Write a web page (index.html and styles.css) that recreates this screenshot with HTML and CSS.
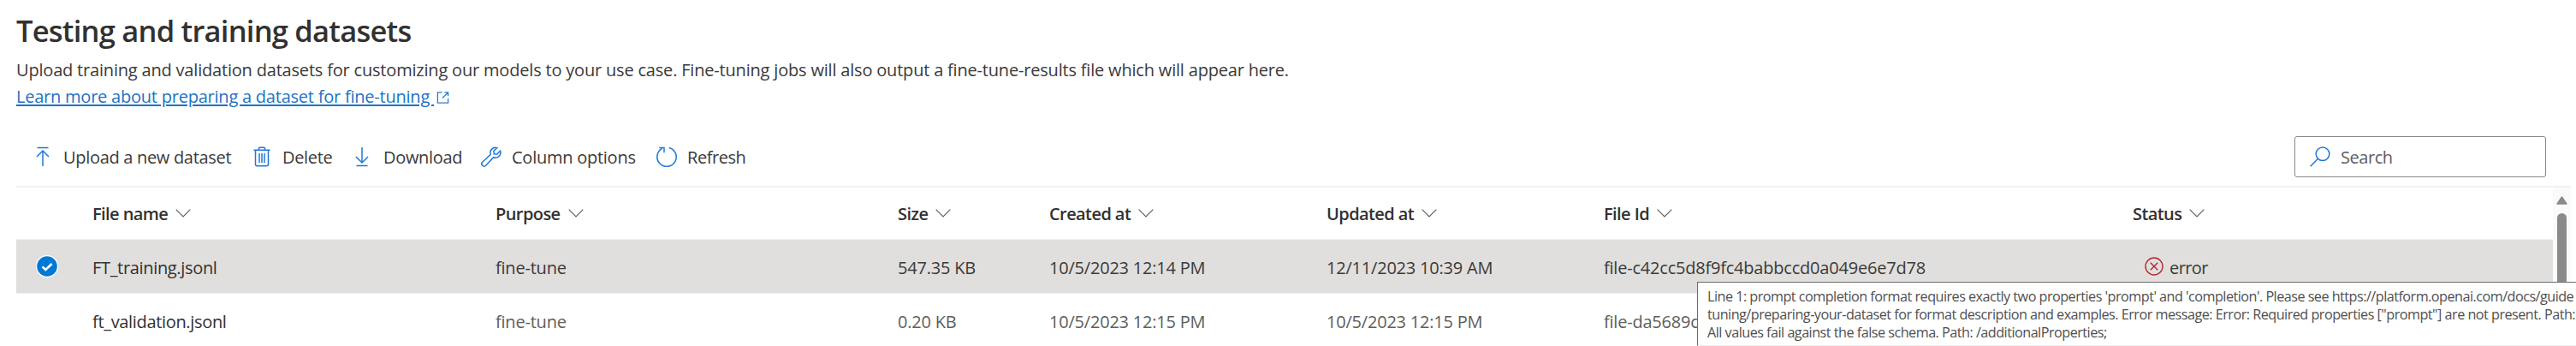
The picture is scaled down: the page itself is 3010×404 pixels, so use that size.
FILE: index.html
```html
<!DOCTYPE html>
<html lang="en">
<head>
<meta charset="utf-8">
<title>Testing and training datasets</title>
<link rel="stylesheet" href="styles.css">
</head>
<body>
<main class="page">
  <h1 class="title">Testing and training datasets</h1>
  <p class="intro">Upload training and validation datasets for customizing our models to your use case. Fine-tuning jobs will also output a fine-tune-results file which will appear here.</p>
  <p class="intro link-line"><a class="link">Learn more about preparing a dataset for fine-tuning&nbsp;</a><svg class="ext" viewBox="0 0 16 16"><path d="M7 1.500H1.500V14.500H14.500V9M10 1.500H14.500V6M14.500 1.500L7.500 8.500"/></svg></p>

  <div class="toolbar">
    <button class="cmd upload"><svg viewBox="0 0 24 24"><path d="M5.500 1.500H18.500M12 23V5M5 12L12 5L19 12"/></svg><span>Upload a new dataset</span></button>
    <button class="cmd delete"><svg viewBox="0 0 24 24"><path d="M2.500 4.200H21.500M4.500 4.200V20.700Q4.500 22.700 6.500 22.700H17.500Q19.500 22.700 19.500 20.700V4.200M8.500 4V2Q8.500 1.200 9.300 1.200H14.700Q15.500 1.200 15.500 2V4M9 8V19M12 8V19M15 8V19"/></svg><span>Delete</span></button>
    <button class="cmd download"><svg viewBox="0 0 24 24"><path d="M5.500 22.500H18.500M12 1V19M5 12L12 19L19 12"/></svg><span>Download</span></button>
    <button class="cmd columns"><svg viewBox="0 0 24 24"><path d="M18.800 1.600A6 6 0 0 0 11.300 9.300L1.700 18.300A2.700 2.700 0 0 0 5.700 22.300L14.700 12.700A6 6 0 0 0 22.600 5.200L18.800 9L15.200 8.800L15 5.300Z"/></svg><span>Column options</span></button>
    <button class="cmd refresh"><svg viewBox="0 0 24 24"><path d="M14.800 1.400A11.200 11.200 0 1 1 6.700 2.400M3.200 1.500H9V7.300"/></svg><span>Refresh</span></button>
    <div class="search"><svg viewBox="0 0 24 24"><circle cx="15" cy="8.800" r="7.800"/><path d="M9.500 14.300L.700 23.200"/></svg><span>Search</span></div>
  </div>

  <div class="list">
    <div class="rows">
      <div class="row head">
        <div></div>
        <div>File name<svg class="chev" viewBox="0 0 18 10"><path d="M.700.700L9 9L17.300.700"/></svg></div>
        <div>Purpose<svg class="chev" viewBox="0 0 18 10"><path d="M.700.700L9 9L17.300.700"/></svg></div>
        <div>Size<svg class="chev" viewBox="0 0 18 10"><path d="M.700.700L9 9L17.300.700"/></svg></div>
        <div>Created at<svg class="chev" viewBox="0 0 18 10"><path d="M.700.700L9 9L17.300.700"/></svg></div>
        <div>Updated at<svg class="chev" viewBox="0 0 18 10"><path d="M.700.700L9 9L17.300.700"/></svg></div>
        <div>File Id<svg class="chev" viewBox="0 0 18 10"><path d="M.700.700L9 9L17.300.700"/></svg></div>
        <div>Status<svg class="chev" viewBox="0 0 18 10"><path d="M.700.700L9 9L17.300.700"/></svg></div>
      </div>
      <div class="row selected">
        <div class="check"><svg viewBox="0 0 26 26"><circle cx="13" cy="13" r="13" fill="#fff"/><circle cx="13" cy="13" r="11.800" fill="#0078d4"/><path d="M7.500 13.400L11.300 17L18.600 10" fill="none" stroke="#fff" stroke-width="2.600"/></svg></div>
        <div class="name">FT_training.jsonl</div>
        <div>fine-tune</div>
        <div>547.35 KB</div>
        <div>10/5/2023 12:14 PM</div>
        <div>12/11/2023 10:39 AM</div>
        <div>file-c42cc5d8f9fc4babbccd0a049e6e7d78</div>
        <div class="status"><svg viewBox="0 0 22 22"><circle cx="11" cy="11" r="10"/><path d="M6.800 6.800L15.200 15.200M15.200 6.800L6.800 15.200"/></svg>error</div>
      </div>
      <div class="row">
        <div></div>
        <div class="name">ft_validation.jsonl</div>
        <div>fine-tune</div>
        <div>0.20 KB</div>
        <div>10/5/2023 12:15 PM</div>
        <div>10/5/2023 12:15 PM</div>
        <div>file-da5689c</div>
        <div></div>
      </div>
    </div>
    <div class="scrollbar">
      <svg viewBox="0 0 13 10"><path d="M6.500 1L12 9H1Z" fill="#8a8a8a" stroke="#8a8a8a" stroke-width="1.500" stroke-linejoin="round"/></svg>
      <div class="thumb"></div>
    </div>
  </div>
</main>
<div class="tooltip">
  <div class="first">Line 1: prompt completion format requires exactly two properties 'prompt' and 'completion'. Please see https://platform.openai.com/docs/guide</div>
  <div>tuning/preparing-your-dataset for format description and examples. Error message: Error: Required properties ["prompt"] are not present. Path:</div>
  <div>All values fail against the false schema. Path: /additionalProperties;</div>
</div>
</body>
</html>
```
FILE: styles.css
```css
* { box-sizing: border-box; }

html, body {
  margin: 0;
  height: 404px;
  overflow: hidden;
  background: #fff;
}

body {
  position: relative;
  font: 400 20px/31px "Open Sans", "Noto Sans", sans-serif;
  color: #3b3a39;
}

.page { padding: 12px 6px 0 19px; }

.title {
  margin: 0 0 7px;
  color: #323130;
  font-size: 34.500px;
  line-height: 47px;
  font-weight: 600;
  letter-spacing: -0.770px;
}

.intro {
  margin: 0;
  height: 31px;
  letter-spacing: -0.190px;
  white-space: nowrap;
}

.link-line {
  display: flex;
  align-items: center;
  letter-spacing: -0.225px;
}

.link {
  color: #1a73c4;
  text-decoration: underline;
  text-decoration-thickness: 1.500px;
  text-underline-offset: 2px;
}

.ext {
  width: 15px;
  height: 16px;
  margin-left: 3px;
  margin-top: 3px;
  fill: none;
  stroke: #2b7cd3;
  stroke-width: 1.400;
}

.toolbar {
  display: flex;
  align-items: center;
  height: 68px;
  margin-top: 21px;
  padding: 0 29px 0 18px;
}

.cmd {
  display: flex;
  flex: none;
  align-items: center;
  padding: 0;
  border: 0;
  background: none;
  font: inherit;
  color: inherit;
  letter-spacing: -0.310px;
  white-space: nowrap;
}

.cmd svg, .search svg {
  flex: none;
  width: 24px;
  height: 24px;
  fill: none;
  stroke: #1f78d8;
  stroke-width: 1.500;
}

.upload { width: 257px; gap: 12px; padding-left: 1px; }
.delete { width: 117px; gap: 12px; }
.download { width: 151px; gap: 13px; }
.columns { width: 205px; gap: 12px; letter-spacing: -0.250px; }
.refresh { gap: 12px; letter-spacing: -0.450px; }

.search {
  display: flex;
  align-items: center;
  gap: 12px;
  width: 294px;
  height: 48px;
  margin-left: auto;
  padding-left: 17px;
  border: 1.500px solid #8a8886;
  border-radius: 3px;
  color: #605e5c;
  letter-spacing: -0.450px;
}

.list {
  display: flex;
  height: 190px;
  border-top: 2px solid #f3f2f1;
}

.rows { width: 2964px; flex: none; }

.row {
  display: grid;
  grid-template-columns: 89px 471px 470px 177px 324px 324px 618px 1fr;
  align-items: center;
  height: 63px;
  padding-top: 3px;
  border-bottom: 1px solid #f3f2f1;
  color: #605e5c;
  letter-spacing: -0.210px;
  white-space: nowrap;
}

.head {
  height: 61px;
  padding-top: 0;
  color: #323130;
  font-weight: 600;
  letter-spacing: -0.580px;
}

.selected { background: #e1dfdd; color: #3b3a39; }
.name { color: #323130; letter-spacing: -0.330px; }

.chev {
  width: 18px;
  height: 10px;
  margin-left: 9px;
  margin-bottom: 3px;
  fill: none;
  stroke: #605e5c;
  stroke-width: 1.200;
}

.check { padding-left: 23px; }
.check svg { display: block; width: 26px; height: 26px; margin-top: -4px; }

.status {
  display: flex;
  align-items: center;
  gap: 7px;
  padding-left: 14px;
  letter-spacing: -0.600px;
}
.status svg {
  width: 22px;
  height: 22px;
  margin-top: -4px;
  fill: none;
  stroke: #b5262c;
  stroke-width: 1.400;
}

.scrollbar {
  display: flex;
  flex-direction: column;
  align-items: center;
  width: 21px;
  padding-top: 10px;
  background: #fafafa;
}
.scrollbar svg { width: 13px; height: 10px; flex: none; }
.thumb {
  width: 11px;
  flex: 1;
  margin-top: 10px;
  border-radius: 6px 6px 0 0;
  background: #8a8a8a;
}

/* Hover text for the error status, running past the right edge */
.tooltip {
  position: absolute;
  left: 1983px;
  top: 329px;
  width: 1060px;
  height: 75px;
  padding: 6px 0 0 11px;
  border: 1.500px solid #6b6b6b;
  border-bottom: 1px solid #ececec;
  background: #fff;
  color: #4f4f4f;
  font-size: 16.200px;
  line-height: 21px;
  letter-spacing: -0.510px;
  white-space: nowrap;
}

.first { letter-spacing: -0.520px; }
```
